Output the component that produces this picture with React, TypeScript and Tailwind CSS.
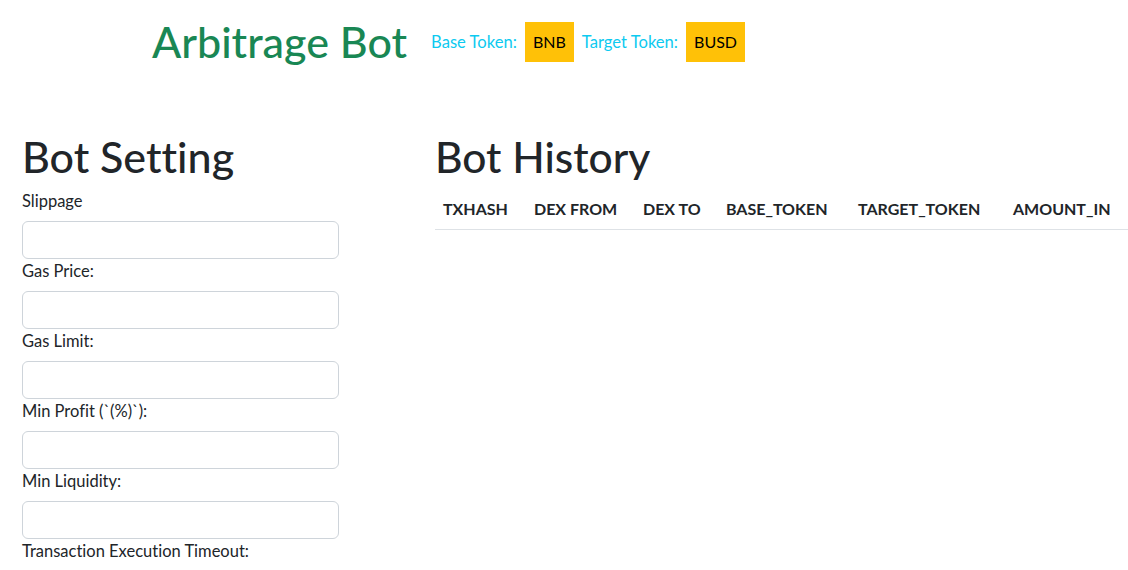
import React from "react";

const fields = [
  "Slippage",
  "Gas Price:",
  "Gas Limit:",
  "Min Profit (`(%)`):",
  "Min Liquidity:",
  "Transaction Execution Timeout:",
];

const cols: { label: string; w: string }[] = [
  { label: "TXHASH", w: "w-[91px]" },
  { label: "DEX FROM", w: "w-[109px]" },
  { label: "DEX TO", w: "w-[83px]" },
  { label: "BASE_TOKEN", w: "w-[132px]" },
  { label: "TARGET_TOKEN", w: "w-[155px]" },
  { label: "AMOUNT_IN", w: "w-[124px]" },
];

export default function App() {
  return (
    <div
      className="w-[1128px] h-[570px] overflow-hidden bg-white text-[#212529] [font-variant-ligatures:none]"
      style={{ fontFamily: "Lato, 'Noto Sans', sans-serif" }}
    >
      <header className="flex items-center pl-[152px] pt-[22px] h-[62px]">
        <h1 className="text-[43px] leading-[48px] font-medium text-[#198754] m-0">
          Arbitrage Bot
        </h1>
        <div className="flex items-center ml-[24px] text-[16.6px] leading-[24px]">
          <span className="text-[#0dcaf0]">Base Token:</span>
          <span className="ml-2 bg-[#ffc107] text-black text-[16px] px-2 h-[40px] flex items-center">
            BNB
          </span>
          <span className="ml-[8px] text-[#0dcaf0]">Target Token:</span>
          <span className="ml-2 bg-[#ffc107] text-black text-[16px] px-2 h-[40px] flex items-center">
            BUSD
          </span>
        </div>
      </header>

      <div className="flex mt-[71px]">
        <section className="pl-[22px] w-[434px] shrink-0">
          <h1 className="text-[43px] leading-[48px] font-medium mb-2">Bot Setting</h1>
          {fields.map((f) => (
            <div key={f}>
              <label className="block text-[16.5px] leading-[24px] mb-2">{f}</label>
              <input
                type="text"
                className="block w-[317px] h-[38px] border border-[#ced4da] rounded-[6px] bg-white px-3"
              />
            </div>
          ))}
        </section>

        <section className="flex-1 min-w-0 pl-[1px]">
          <h1 className="text-[42.5px] leading-[48px] font-medium mb-2">
            Bot History
          </h1>
          <table className="border-collapse table-fixed w-[694px]">
            <thead>
              <tr className="border-b border-[#dee2e6]">
                {cols.map((c) => (
                  <th
                    key={c.label}
                    className={`${c.w} text-left font-bold text-[16px] leading-[24px] px-2 py-2 whitespace-nowrap`}
                  >
                    {c.label}
                  </th>
                ))}
              </tr>
            </thead>
            <tbody></tbody>
          </table>
        </section>
      </div>
    </div>
  );
}
